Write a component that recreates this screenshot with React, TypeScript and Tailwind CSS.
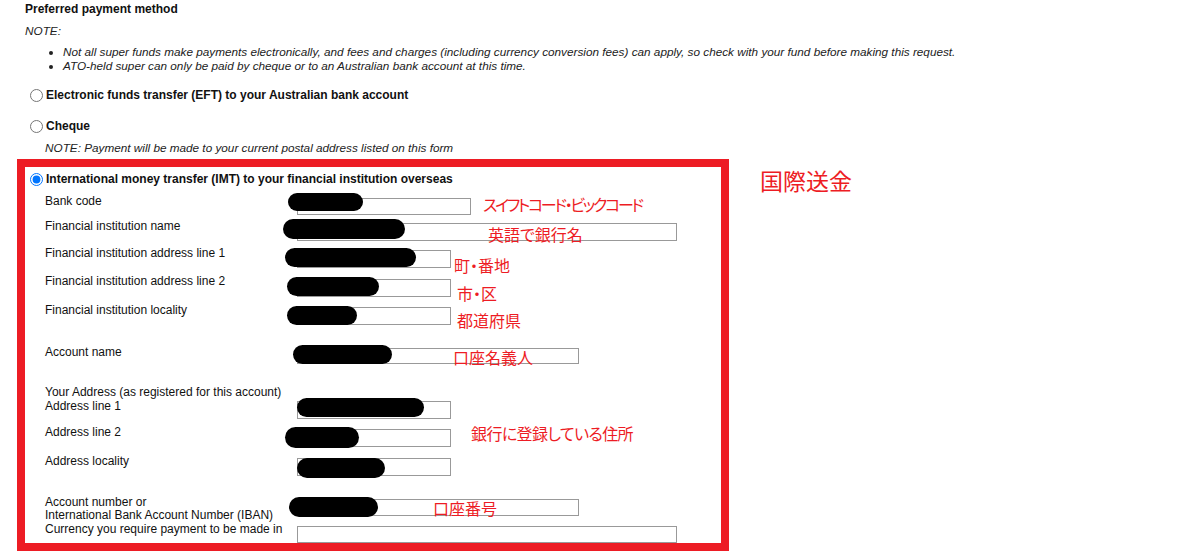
import React from 'react';

// one form row: label on the left, text box in the input column
type Row = {
  label: React.ReactNode;
  h: string;
  mt: string;
  w: string;
  ih: string;
  lead?: string;
};

const rows: Row[] = [
  { label: 'Bank code', h: 'h-[25px]', mt: 'mt-[4px]', w: 'w-[174px]', ih: 'h-[17px]' },
  { label: 'Financial institution name', h: 'h-[27px]', mt: 'mt-[4px]', w: 'w-[380px]', ih: 'h-[18px]' },
  { label: 'Financial institution address line 1', h: 'h-[28px]', mt: 'mt-[4px]', w: 'w-[154px]', ih: 'h-[18px]' },
  { label: 'Financial institution address line 2', h: 'h-[29px]', mt: 'mt-[5px]', w: 'w-[154px]', ih: 'h-[18px]' },
  { label: 'Financial institution locality', h: 'h-[42px]', mt: 'mt-[4px]', w: 'w-[154px]', ih: 'h-[18px]' },
  { label: 'Account name', h: 'h-[40px]', mt: 'mt-[3px]', w: 'w-[282px]', ih: 'h-[16px]' },
  {
    label: (
      <>
        Your Address (as registered for this account)
        <br />
        Address line 1
      </>
    ),
    h: 'h-[40px]',
    mt: 'mt-[16px]',
    w: 'w-[154px]',
    ih: 'h-[18px]',
  },
  { label: 'Address line 2', h: 'h-[29px]', mt: 'mt-[4px]', w: 'w-[154px]', ih: 'h-[18px]' },
  { label: 'Address locality', h: 'h-[42px]', mt: 'mt-[4px]', w: 'w-[154px]', ih: 'h-[18px]' },
  {
    label: (
      <>
        Account number or
        <br />
        International Bank Account Number (IBAN)
      </>
    ),
    h: 'h-[26px]',
    mt: 'mt-[3px]',
    w: 'w-[282px]',
    ih: 'h-[17px]',
    lead: 'leading-[13px]',
  },
  { label: 'Currency you require payment to be made in', h: 'h-[20px]', mt: 'mt-[4px]', w: 'w-[380px]', ih: 'h-[17px]' },
];

// black marker scribbles hiding the entered values
const blobs = [
  'left-[288px] top-[193px] w-[75px] h-[18px]',
  'left-[283px] top-[219px] w-[122px] h-[20px]',
  'left-[285px] top-[248px] w-[131px] h-[19px]',
  'left-[287px] top-[277px] w-[92px] h-[19px]',
  'left-[287px] top-[306px] w-[70px] h-[19px]',
  'left-[293px] top-[345px] w-[99px] h-[19px]',
  'left-[297px] top-[398px] w-[127px] h-[19px]',
  'left-[285px] top-[427px] w-[74px] h-[21px]',
  'left-[297px] top-[458px] w-[88px] h-[20px]',
  'left-[289px] top-[497px] w-[89px] h-[20px]',
];

// red handwritten-style notes in Japanese
const notes = [
  { text: 'スイフトコード・ビックコード', cls: 'left-[483px] top-[196px] tracking-[-2.3px]' },
  { text: '英語で銀行名', cls: 'left-[488px] top-[226px]' },
  { text: '町・番地', cls: 'left-[454px] top-[257px]' },
  { text: '市・区', cls: 'left-[457px] top-[285px]' },
  { text: '都道府県', cls: 'left-[457px] top-[312px]' },
  { text: '口座名義人', cls: 'left-[453px] top-[349px]' },
  { text: '銀行に登録している住所', cls: 'left-[471px] top-[425px] tracking-[-0.6px]' },
  { text: '口座番号', cls: 'left-[433px] top-[500px]' },
];

export default function App() {
  return (
    <div className="relative w-[1200px] h-[555px] overflow-hidden bg-white text-[12px] text-[#111] font-['Liberation_Sans',Arial,sans-serif]">
      <div className="pl-[25px] pt-[2px]">
        <div className="font-bold leading-[14px]">Preferred payment method</div>
        <div className="mt-[8px] text-[11.75px] italic leading-[14px] text-[#222]">NOTE:</div>
        <ul className="mt-[7px] list-disc pl-[38px] text-[11.75px] italic leading-[14px] text-[#222]">
          <li>
            Not all super funds make payments electronically, and fees and charges (including currency conversion fees)
            can apply, so check with your fund before making this request.
          </li>
          <li>ATO-held super can only be paid by cheque or to an Australian bank account at this time.</li>
        </ul>

        <label className="mt-[15px] flex h-[14px] items-center font-bold">
          <input type="radio" name="pay" className="ml-[5px] mr-[3px] h-[13px] w-[13px]" />
          Electronic funds transfer (EFT) to your Australian bank account
        </label>

        <label className="mt-[17px] flex h-[14px] items-center font-bold">
          <input type="radio" name="pay" className="ml-[5px] mr-[3px] h-[13px] w-[13px]" />
          Cheque
        </label>
        <div className="mt-[8px] pl-[20px] text-[11.75px] italic leading-[14px] text-[#222]">
          NOTE: Payment will be made to your current postal address listed on this form
        </div>
      </div>

      {/* highlighted IMT block */}
      <div className="ml-[17px] mt-[4px] h-[392px] w-[712px] border-8 border-[#ed1c24]">
        <label className="mt-[5px] flex h-[14px] items-center font-bold">
          <input type="radio" name="pay" defaultChecked className="ml-[5px] mr-[3px] h-[13px] w-[13px]" />
          International money transfer (IMT) to your financial institution overseas
        </label>

        <div className="mt-[8px] pl-[20px]">
          {rows.map((r, i) => (
            <div key={i} className={`flex ${r.h}`}>
              <div className={`w-[252px] shrink-0 ${r.lead ?? 'leading-[14px]'}`}>{r.label}</div>
              <input type="text" className={`${r.mt} ${r.w} ${r.ih} border border-[#999] bg-white`} />
            </div>
          ))}
        </div>
      </div>

      {blobs.map((b, i) => (
        <div key={i} className={`absolute rounded-full bg-black ${b}`} />
      ))}

      {notes.map((n, i) => (
        <div
          key={i}
          className={`absolute text-[16px] leading-none text-[#ed1c24] [font-feature-settings:'palt'] font-['Noto_Sans_CJK_JP',sans-serif] ${n.cls}`}
        >
          {n.text}
        </div>
      ))}

      <div className="absolute left-[760px] top-[169px] text-[23px] leading-none text-[#ed1c24] font-['Noto_Sans_CJK_JP',sans-serif]">
        国際送金
      </div>
    </div>
  );
}
